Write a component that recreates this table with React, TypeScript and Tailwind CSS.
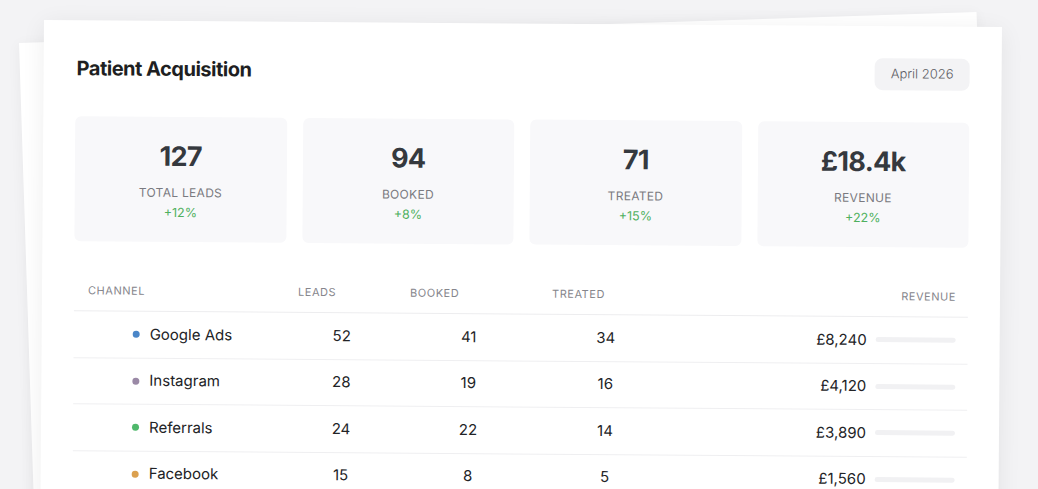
const stats = [
  { value: "127", label: "Total Leads", change: "+12%" },
  { value: "94", label: "Booked", change: "+8%" },
  { value: "71", label: "Treated", change: "+15%" },
  { value: "£18.4k", label: "Revenue", change: "+22%" },
];

const rows = [
  { channel: "Google Ads", dot: "bg-[#4a86c8]", leads: 52, booked: 41, treated: 34, revenue: "£8,240" },
  { channel: "Instagram", dot: "bg-[#9a89a6]", leads: 28, booked: 19, treated: 16, revenue: "£4,120" },
  { channel: "Referrals", dot: "bg-[#4fb86b]", leads: 24, booked: 22, treated: 14, revenue: "£3,890" },
  { channel: "Facebook", dot: "bg-[#dba04f]", leads: 15, booked: 8, treated: 5, revenue: "£1,560" },
];

const cols = "grid grid-cols-[212px_112px_142px_132px_1fr]";

export default function App() {
  return (
    <div className="relative h-[489px] w-[1038px] overflow-hidden bg-[#f3f3f5] font-['Inter','Noto_Sans',sans-serif]">
      {/* sheet underneath */}
      <div className="absolute left-[19px] top-[43px] h-[620px] w-[958px] origin-top-left -rotate-[1.85deg] bg-white shadow-[0_2px_14px_rgba(0,0,0,0.05)]" />

      <div className="relative pl-[44px] pt-[20px]">
        <div className="h-[620px] w-[958px] origin-top-left rotate-[0.42deg] bg-white px-8 pt-8 shadow-[0_4px_24px_rgba(0,0,0,0.07)]">
          <div className="flex h-8 items-center justify-between">
            <h1 className="pl-px text-[20px] font-bold tracking-tight text-[#1e1f22]">Patient Acquisition</h1>
            <span className="flex h-8 items-center rounded-lg bg-[#f3f3f5] px-4 text-[13px] font-light text-[#606066]">
              April 2026
            </span>
          </div>

          <div className="mt-8 grid grid-cols-4 gap-4">
            {stats.map((s) => (
              <div key={s.label} className="flex h-[125px] flex-col items-center rounded-md bg-[#f8f8fa] pt-[22px]">
                <div className="text-[27px] font-bold leading-9 tracking-tight text-[#35393e]">{s.value}</div>
                <div className="mt-[10px] text-[12px] uppercase leading-4 tracking-wide text-[#7a7a80]">{s.label}</div>
                <div className="mt-1 text-[12.5px] leading-4 text-[#4fb05e]">{s.change}</div>
              </div>
            ))}
          </div>

          <div className={`${cols} mt-[30px] h-10 items-center border-b border-[#ededef] text-[11px] uppercase tracking-wider text-[#86868c]`}>
            <div className="pl-[14px]">Channel</div>
            <div className="pl-3">Leads</div>
            <div className="pl-3">Booked</div>
            <div className="pl-3">Treated</div>
            <div className="pr-3 text-right">Revenue</div>
          </div>

          {rows.map((r) => (
            <div key={r.channel} className={`${cols} h-[46.5px] items-center border-b border-[#efeff1] text-[15px] text-[#222326]`}>
              <div className="flex items-center gap-[10px] pl-[59px]">
                <span className={`h-[7px] w-[7px] rounded-full ${r.dot}`} />
                {r.channel}
              </div>
              <div className="text-center">{r.leads}</div>
              <div className="text-center">{r.booked}</div>
              <div className="text-center">{r.treated}</div>
              <div className="flex items-center justify-end gap-[9px] pr-3">
                {r.revenue}
                <span className="h-[5px] w-20 rounded-full bg-[#f1f1f3]" />
              </div>
            </div>
          ))}
        </div>
      </div>
    </div>
  );
}
